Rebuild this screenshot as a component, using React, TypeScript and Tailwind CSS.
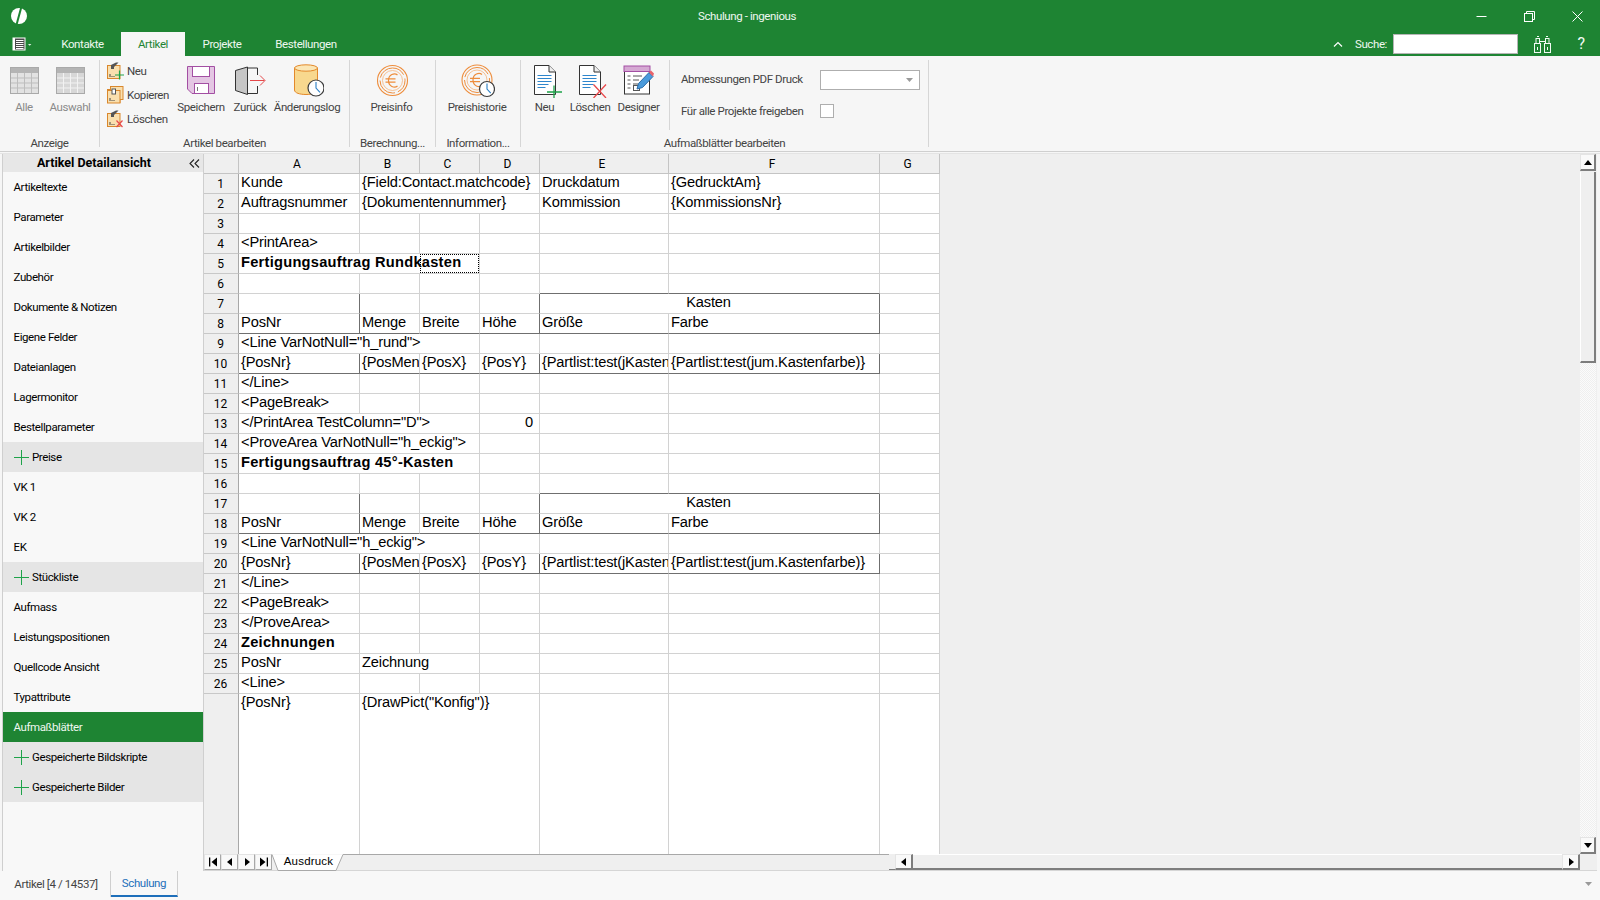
import React from "react";

type Cell = { t?: string; s?: number; c?: string; a?: "r" | "c"; b?: boolean; extra?: React.ReactNode };

const SPAN: Record<number, string> = { 1: "col-span-1", 2: "col-span-2", 3: "col-span-3", 4: "col-span-4" };
const D_R = "border-r-[#6f6f6f]";
const D_B = "border-b-[#6f6f6f]";

const blank = (n: number): Cell[] => Array.from({ length: n }, () => ({}));

const headRow = (): Cell[] => [
  { c: D_R },
  {},
  {},
  { c: D_R },
  { t: "Kasten", s: 2, a: "c", c: D_R },
  {},
];
const labelRow = (): Cell[] => [
  { t: "PosNr", c: `${D_R} ${D_B}` },
  { t: "Menge", c: D_B },
  { t: "Breite", c: D_B },
  { t: "Höhe", c: `${D_R} ${D_B}` },
  { t: "Größe", c: D_B },
  { t: "Farbe", c: `${D_R} ${D_B}` },
  {},
];
const valueRow = (): Cell[] => [
  { t: "{PosNr}", c: `${D_R} ${D_B}` },
  { t: "{PosMenge}", c: D_B },
  { t: "{PosX}", c: D_B },
  { t: "{PosY}", c: `${D_R} ${D_B}` },
  { t: "{Partlist:test(jKastengröße)}", c: D_B },
  { t: "{Partlist:test(jum.Kastenfarbe)}", c: `${D_R} ${D_B}` },
  {},
];
const aboveHead = (): Cell[] => [...blank(4), { c: D_B }, { c: D_B }, {}];

const rows: Cell[][] = [
  [{ t: "Kunde" }, { t: "{Field:Contact.matchcode}", s: 3 }, { t: "Druckdatum" }, { t: "{GedrucktAm}" }, {}],
  [{ t: "Auftragsnummer" }, { t: "{Dokumentennummer}", s: 3 }, { t: "Kommission" }, { t: "{KommissionsNr}" }, {}],
  blank(7),
  [{ t: "<PrintArea>" }, ...blank(6)],
  [
    {
      t: "Fertigungsauftrag Rundkasten",
      s: 3,
      b: true,
      extra: <div className="absolute left-[181px] top-0 h-[19px] w-[59px] border border-dotted border-black" />,
    },
    ...blank(4),
  ],
  aboveHead(),
  headRow(),
  labelRow(),
  [{ t: '<Line VarNotNull="h_rund">', s: 3 }, ...blank(4)],
  valueRow(),
  [{ t: "</Line>" }, ...blank(6)],
  [{ t: "<PageBreak>" }, ...blank(6)],
  [{ t: '</PrintArea TestColumn="D">', s: 3 }, { t: "0", a: "r" }, ...blank(3)],
  [{ t: '<ProveArea VarNotNull="h_eckig">', s: 3 }, ...blank(4)],
  [{ t: "Fertigungsauftrag 45°-Kasten", s: 3, b: true }, ...blank(4)],
  aboveHead(),
  headRow(),
  labelRow(),
  [{ t: '<Line VarNotNull="h_eckig">', s: 3 }, ...blank(4)],
  valueRow(),
  [{ t: "</Line>" }, ...blank(6)],
  [{ t: "<PageBreak>" }, ...blank(6)],
  [{ t: "</ProveArea>" }, ...blank(6)],
  [{ t: "Zeichnungen", b: true }, ...blank(6)],
  [{ t: "PosNr" }, { t: "Zeichnung", s: 2 }, ...blank(4)],
  [{ t: "<Line>" }, ...blank(6)],
];

function GridCell({ cell }: { cell: Cell }) {
  const align = cell.a === "r" ? "text-right pr-[6px]" : cell.a === "c" ? "text-center pr-[2px]" : "pl-[2px]";
  return (
    <div
      className={`relative h-[20px] overflow-hidden whitespace-nowrap border-r border-b border-[#d2d2d2] bg-white leading-[17px] text-black ${SPAN[cell.s ?? 1]} ${align} ${cell.b ? "text-[14.67px] font-bold tracking-[0.25px]" : "text-[14.67px] tracking-[-0.15px]"} ${cell.c ?? ""}`}
    >
      {cell.t}
      {cell.extra}
    </div>
  );
}

function Sheet() {
  return (
    <div className="grid w-[736px] grid-cols-[35px_121px_60px_60px_60px_129px_211px_60px] font-['Liberation_Sans',Arial,sans-serif] tracking-normal">
      <div className="h-[20px] border-r border-b border-[#c4c4c4] bg-[#efefef]" />
      {["A", "B", "C", "D", "E", "F", "G"].map((h) => (
        <div
          key={h}
          className="h-[20px] border-r border-b border-[#c4c4c4] bg-[#efefef] pr-[4px] text-center font-['Roboto',sans-serif] text-[12px] leading-[21px] text-black"
        >
          {h}
        </div>
      ))}
      {rows.map((r, i) => (
        <React.Fragment key={i}>
          <div className="h-[20px] border-r border-b border-r-[#a8a8a8] border-b-[#c8c8c8] bg-[#efefef] pr-px text-center font-['Roboto',sans-serif] text-[12px] leading-[20px] text-black">
            {i + 1}
          </div>
          {r.map((c, j) => (
            <GridCell key={j} cell={c} />
          ))}
        </React.Fragment>
      ))}
      <div className="h-[160px] border-r border-r-[#a8a8a8] bg-[#efefef]" />
      <div className="h-[160px] border-r border-[#d2d2d2] bg-white pl-[2px] text-[14.67px] leading-[17px] tracking-[-0.15px] text-black">{"{PosNr}"}</div>
      <div className="col-span-3 h-[160px] border-r border-[#d2d2d2] bg-white pl-[2px] text-[14.67px] leading-[17px] tracking-[-0.15px] text-black">
        {'{DrawPict("Konfig")}'}
      </div>
      <div className="h-[160px] border-r border-[#d2d2d2] bg-white" />
      <div className="h-[160px] border-r border-[#d2d2d2] bg-white" />
      <div className="h-[160px] border-r border-[#d2d2d2] bg-white" />
    </div>
  );
}

/* ---------- icons ---------- */

function Logo() {
  return (
    <svg width="18" height="18" viewBox="0 0 18 18">
      <circle cx="9" cy="9" r="8" fill="#fff" />
      <path d="M11.2 0.5 L6.6 17.5" stroke="#1e8433" strokeWidth="2" />
    </svg>
  );
}
function FileMenu() {
  return (
    <svg width="20" height="16" viewBox="0 0 20 16">
      <rect x="0.5" y="1.5" width="13" height="13" fill="#fff" />
      <rect x="3" y="2.5" width="9.5" height="11" fill="#4a4a4a" />
      <path d="M4 4.5h7.5M4 6.5h7.5M4 8.5h7.5M4 10.5h7.5M4 12.5h7.5" stroke="#fff" strokeWidth="1" />
      <path d="M16 8h3.4l-1.7 1.8z" fill="#dfeee2" />
    </svg>
  );
}
function TableIcon({ light }: { light?: boolean }) {
  const line = light ? "#f2f2f2" : "#bdbdbd";
  const fill = light ? "#d7d7d7" : "#e2e2e2";
  return (
    <svg width="29" height="30" viewBox="0 0 29 30">
      <rect x="0.5" y="3.5" width="28" height="26" fill={fill} stroke="#a9a9a9" />
      <rect x="1" y="4" width="27" height="5" fill="#b4b4b4" />
      <path
        d="M1 14h27M1 19h27M1 24h27M7.5 9v20M14.5 9v20M21.5 9v20"
        stroke={line}
        strokeWidth="1"
        fill="none"
      />
    </svg>
  );
}
function BoxIcon({ kind }: { kind: "plus" | "copy" | "x" }) {
  return (
    <svg width="18" height="18" viewBox="0 0 18 18">
      <rect x="0.5" y="3.5" width="12.5" height="13" fill="#f9dfae" stroke="#d9872c" />
      {kind === "copy" ? (
        <>
          <rect x="3.5" y="0.5" width="12.5" height="13" fill="#f9dfae" stroke="#d9872c" />
          <rect x="0.5" y="4.5" width="12.5" height="12.5" fill="#f9dfae" stroke="#d9872c" />
          <rect x="5" y="3" width="3.5" height="5" fill="#fff" stroke="#555" />
        </>
      ) : (
        <path d="M4 7 L4 3 L9 0.5 L11.5 0.5 L7 5 L7 7z" fill="#555" />
      )}
      <path d="M3 12v3M5 14v1M7 14v1" stroke="#444" strokeWidth="1" />
      {kind === "plus" && <path d="M12.5 8.5v9M8 13h9" stroke="#1ea34a" strokeWidth="1.2" />}
      {kind === "x" && <path d="M9.5 10.5l6 6.5M15.5 10.5l-6 6.5" stroke="#e8484a" strokeWidth="1.2" />}
    </svg>
  );
}
function Floppy() {
  return (
    <svg width="28" height="30" viewBox="0 0 28 30">
      <path d="M0.5 2.5H27.5V29.5H5L0.5 25z" fill="#e4c6e3" stroke="#a34fa3" />
      <rect x="5.5" y="2.5" width="17" height="10" fill="#fff" stroke="#a34fa3" />
      <rect x="7.5" y="19.5" width="14" height="10" fill="#fff" stroke="#a34fa3" />
      <path d="M10.5 23v4" stroke="#777" />
    </svg>
  );
}
function Door() {
  return (
    <svg width="31" height="32" viewBox="0 0 31 32">
      <path d="M12.5 3L0.5 6.5V26.5L12.5 30.5z" fill="#c6c6c6" stroke="#333" />
      <path d="M12.5 4H22.5V11M22.5 22V29.5H12.5" fill="none" stroke="#333" />
      <path d="M15 16.5H29.5M25 11.5L30 16.5L25 21.5" fill="none" stroke="#e5484a" strokeWidth="1" />
    </svg>
  );
}
function Clock({ cx, cy, r }: { cx: number; cy: number; r: number }) {
  return (
    <>
      <circle cx={cx} cy={cy} r={r} fill="#fff" stroke="#3c3c3c" strokeWidth="1.2" />
      <path d={`M${cx} ${cy - r + 2}V${cy}L${cx + r * 0.5} ${cy + r * 0.55}`} fill="none" stroke="#2b7fc4" strokeWidth="1.1" />
    </>
  );
}
function Database() {
  return (
    <svg width="34" height="34" viewBox="0 0 34 34">
      <path d="M4.5 4V26C4.5 29 10 30.5 16 30.5S27.5 29 27.5 26V4z" fill="#f8d88e" stroke="#e3892b" />
      <ellipse cx="16" cy="4" rx="11.5" ry="3.2" fill="#fbe6b5" stroke="#e3892b" />
      <Clock cx={26} cy={24} r={8} />
    </svg>
  );
}
function Coin({ cx, cy }: { cx: number; cy: number }) {
  const o = "#ee8d3c";
  return (
    <g fill="none" stroke={o}>
      <circle cx={cx} cy={cy} r={15} strokeWidth="1.1" />
      <circle cx={cx} cy={cy} r={12.5} strokeWidth="1" strokeDasharray="14 3 22 3 30 4" />
      <circle cx={cx} cy={cy} r={10} strokeWidth="0.8" stroke="#f5b27b" />
      <path
        d={`M${cx + 5} ${cy - 5.5}C${cx + 2} ${cy - 8} ${cx - 4} ${cy - 6} ${cx - 4} ${cy}S${cx + 2} ${cy + 8} ${cx + 5} ${cy + 5.5}M${cx - 7} ${cy - 1.6}H${cx + 3}M${cx - 7} ${cy + 1.6}H${cx + 3}`}
        strokeWidth="1.2"
      />
    </g>
  );
}
function PriceInfo() {
  return (
    <svg width="34" height="34" viewBox="0 0 34 34">
      <Coin cx={17.5} cy={16.5} />
    </svg>
  );
}
function PriceHistory() {
  return (
    <svg width="36" height="34" viewBox="0 0 36 34">
      <Coin cx={18} cy={16} />
      <Clock cx={28} cy={25} r={7.5} />
    </svg>
  );
}
function DocIcon({ kind }: { kind: "plus" | "x" }) {
  return (
    <svg width="34" height="34" viewBox="0 0 34 34">
      <path d="M6.5 1.5H21L27.5 8V30.5H6.5z" fill="#fff" stroke="#333" />
      <path d="M21 1.5V8H27.5" fill="#eee" stroke="#333" />
      <path d="M9.5 11.5h14M9.5 14.5h14M9.5 17.5h14M9.5 20.5h11M9.5 23.5h8" stroke="#2f86cc" strokeWidth="1" />
      {kind === "plus" ? (
        <path d="M26 21.5v13M19 28h15" stroke="#1ea34a" strokeWidth="1.3" />
      ) : (
        <path d="M20.5 20.5l12.5 13.5M33 20.5L20.5 34" stroke="#e8484a" strokeWidth="1.3" />
      )}
    </svg>
  );
}
function Designer() {
  return (
    <svg width="32" height="32" viewBox="0 0 32 32">
      <rect x="1.5" y="2.5" width="25" height="27.5" fill="#fff" stroke="#333" />
      <rect x="1" y="2" width="26" height="5.5" fill="#d5a9d3" stroke="#a34fa3" />
      <path d="M4.5 12h3M4.5 16h3M4.5 20h3M4.5 24h3M10 12h9M10 16h6M10 20h5" stroke="#555" strokeWidth="1" />
      <rect x="10.5" y="21.5" width="6" height="5" fill="none" stroke="#555" />
      <path d="M14 25L15.5 19.5L26 8.5L30 12.5L19.5 23.5z" fill="#4b9bdc" stroke="#2b6ca8" />
      <path d="M26 8.5L28 6.5L31 9.5L30 12.5z" fill="#e8636a" />
    </svg>
  );
}
function Binoculars() {
  return (
    <svg width="17" height="17" viewBox="0 0 17 17" fill="none" stroke="#f2fbf4">
      <rect x="0.5" y="7.5" width="6" height="9" />
      <rect x="10.5" y="7.5" width="6" height="9" />
      <rect x="2" y="2.5" width="3.5" height="5" />
      <rect x="11.5" y="2.5" width="3.5" height="5" />
      <path d="M3 0.5h2M12 0.5h2M6 5.5h5M3.5 11v3M13.5 11v3" />
    </svg>
  );
}
function Plus() {
  return (
    <svg width="15" height="15" viewBox="0 0 15 15">
      <path d="M7.5 0v15M0 7.5h15" stroke="#1ea34a" strokeWidth="1" />
    </svg>
  );
}
function Tri({ dir }: { dir: "up" | "down" | "left" | "right" | "first" | "last" }) {
  const p: Record<string, string> = {
    up: "M1 8h8L5 3z",
    down: "M1 3h8L5 8z",
    left: "M7 1v8L2 5z",
    right: "M3 1v8L8 5z",
    first: "M9 0.5v9L3.5 5zM1 0.5h1.3v9H1z",
    last: "M1 0.5v9L6.5 5zM9 0.5h-1.3v9H9z",
  };
  return (
    <svg width="10" height="10" viewBox="0 0 10 10">
      <path d={p[dir]} fill="#000" />
    </svg>
  );
}

/* ---------- ribbon parts ---------- */

function Large({ w, icon, label, dim }: { w: string; icon: React.ReactNode; label: string; dim?: boolean }) {
  return (
    <div className={`flex shrink-0 flex-col items-center pt-[8px] ${w}`}>
      <div className="flex h-[34px] items-start justify-center">{icon}</div>
      <div className={`h-[18px] whitespace-nowrap leading-[18px] ${dim ? "text-[#8a8a8a]" : "text-[#444]"}`}>{label}</div>
    </div>
  );
}
function Small({ icon, label }: { icon: React.ReactNode; label: string }) {
  return (
    <div className="flex h-[24px] items-center gap-[2px] pl-[3px]">
      {icon}
      <span className="whitespace-nowrap pt-px text-[#444]">{label}</span>
    </div>
  );
}
function Group({ w, label, children }: { w: string; label: string; children: React.ReactNode }) {
  return (
    <div className={`flex shrink-0 flex-col ${w}`}>
      <div className="flex h-[78px]">{children}</div>
      <div className="h-[17px] whitespace-nowrap pt-px text-center leading-[17px] text-[#444]">{label}</div>
    </div>
  );
}
const Sep = () => <div className="my-[4px] w-px shrink-0 bg-[#d6d6d6]" />;

const sideItems: { t: string; g?: boolean; a?: boolean }[] = [
  { t: "Artikeltexte" },
  { t: "Parameter" },
  { t: "Artikelbilder" },
  { t: "Zubehör" },
  { t: "Dokumente & Notizen" },
  { t: "Eigene Felder" },
  { t: "Dateianlagen" },
  { t: "Lagermonitor" },
  { t: "Bestellparameter" },
  { t: "Preise", g: true },
  { t: "VK 1" },
  { t: "VK 2" },
  { t: "EK" },
  { t: "Stückliste", g: true },
  { t: "Aufmass" },
  { t: "Leistungspositionen" },
  { t: "Quellcode Ansicht" },
  { t: "Typattribute" },
  { t: "Aufmaßblätter", a: true },
  { t: "Gespeicherte Bildskripte", g: true },
  { t: "Gespeicherte Bilder", g: true },
];

const scrollBtn =
  "flex items-center justify-center bg-[#f9f9f9] border-l border-t border-l-[#e4e4e4] border-t-[#e4e4e4] border-r-2 border-b-2 border-r-[#7d7d7d] border-b-[#7d7d7d]";

export default function App() {
  return (
    <div className="flex h-[900px] w-[1600px] flex-col overflow-hidden bg-[#f6f6f6] font-['Roboto',sans-serif] text-[11.5px] tracking-[-0.4px]">
      {/* title bar */}
      <div className="flex h-[32px] shrink-0 items-center bg-[#1e8433] text-[#eef8f0]">
        <div className="flex w-[28px] justify-end">
          <Logo />
        </div>
        <div className="ml-[670px] whitespace-nowrap pt-px">Schulung - ingenious</div>
        <div className="-mr-px ml-auto flex">
          <div className="flex h-[32px] w-[48px] items-center justify-center">
            <svg width="11" height="11" viewBox="0 0 11 11">
              <path d="M0.5 5.5H10.5" stroke="#fff" />
            </svg>
          </div>
          <div className="flex h-[32px] w-[48px] items-center justify-center">
            <svg width="11" height="11" viewBox="0 0 11 11" fill="none" stroke="#fff">
              <rect x="0.5" y="2.5" width="8" height="8" />
              <path d="M2.5 2.5V0.5H10.5V8.5H8.5" />
            </svg>
          </div>
          <div className="flex h-[32px] w-[48px] items-center justify-center">
            <svg width="11" height="11" viewBox="0 0 11 11">
              <path d="M0.5 0.5L10.5 10.5M10.5 0.5L0.5 10.5" stroke="#fff" />
            </svg>
          </div>
        </div>
      </div>

      {/* tab row */}
      <div className="flex h-[24px] shrink-0 items-center bg-[#1e8433] text-[#eef8f0]">
        <div className="flex w-[44px] justify-start pl-[12px]">
          <FileMenu />
        </div>
        <div className="w-[77px] pt-[2px] text-center">Kontakte</div>
        <div className="flex h-[24px] w-[64px] items-center justify-center bg-[#f6f6f6] pt-[2px] text-[#1e8433]">Artikel</div>
        <div className="w-[74px] pt-[2px] text-center">Projekte</div>
        <div className="w-[94px] pt-[2px] text-center">Bestellungen</div>
        <div className="ml-auto flex items-center">
          <svg width="10" height="7" viewBox="0 0 10 7" fill="none" stroke="#fff" strokeWidth="1.2">
            <path d="M1 5.5L5 1.5L9 5.5" />
          </svg>
          <span className="ml-[12px] pt-px">Suche:</span>
          <div className="ml-[6px] h-[20px] w-[125px] border border-[#b5b5b5] bg-white" />
          <div className="ml-[16px]">
            <Binoculars />
          </div>
          <div className="ml-[22px] mr-[11px] w-[16px] text-center text-[16px] leading-[18px] text-[#f2fbf4]">?</div>
        </div>
      </div>

      {/* ribbon */}
      <div className="flex h-[95px] shrink-0">
        <Group w="w-[99px]" label="Anzeige">
          <div className="w-px" />
          <Large w="w-[46px]" icon={<TableIcon />} label="Alle" dim />
          <Large w="w-[46px]" icon={<TableIcon light />} label="Auswahl" dim />
        </Group>
        <Sep />
        <Group w="w-[249px]" label="Artikel bearbeiten">
          <div className="w-[4px]" />
          <div className="flex w-[71px] flex-col pt-[3px]">
            <Small icon={<BoxIcon kind="plus" />} label="Neu" />
            <Small icon={<BoxIcon kind="copy" />} label="Kopieren" />
            <Small icon={<BoxIcon kind="x" />} label="Löschen" />
          </div>
          <Large w="w-[52px]" icon={<Floppy />} label="Speichern" />
          <Large w="w-[46px]" icon={<Door />} label="Zurück" />
          <Large w="w-[68px]" icon={<Database />} label="Änderungslog" />
        </Group>
        <Sep />
        <Group w="w-[85px]" label="Berechnung...">
          <Large w="w-[83px]" icon={<PriceInfo />} label="Preisinfo" />
        </Group>
        <Sep />
        <Group w="w-[84px]" label="Information...">
          <Large w="w-[82px]" icon={<PriceHistory />} label="Preishistorie" />
        </Group>
        <Sep />
        <Group w="w-[407px]" label="Aufmaßblätter bearbeiten">
          <Large w="w-[47px]" icon={<DocIcon kind="plus" />} label="Neu" />
          <Large w="w-[44px]" icon={<DocIcon kind="x" />} label="Löschen" />
          <Large w="w-[53px]" icon={<Designer />} label="Designer" />
          <div className="ml-[4px] mt-[4px] mb-[-13px] h-[70px] w-px bg-[#d6d6d6]" />
          <div className="ml-[11px] flex flex-col pt-[13px] text-[#444]">
            <div className="flex h-[20px] items-center">
              <span className="w-[139px] whitespace-nowrap pt-px">Abmessungen PDF Druck</span>
              <div className="mt-[1px] flex h-[20px] w-[100px] items-center justify-end border border-[#aeaeae] bg-white pr-[6px]">
                <svg width="7" height="4" viewBox="0 0 7 4">
                  <path d="M0 0h7L3.5 4z" fill="#9a9a9a" />
                </svg>
              </div>
            </div>
            <div className="mt-[12px] flex h-[20px] items-center">
              <span className="w-[139px] whitespace-nowrap pt-px">Für alle Projekte freigeben</span>
              <div className="h-[14px] w-[14px] border border-[#aeaeae] bg-white" />
            </div>
          </div>
        </Group>
        <Sep />
      </div>

      {/* separator */}
      <div className="h-[3px] shrink-0 border-t border-b border-t-[#cfcfcf] border-b-[#e4e4e4] bg-[#f6f6f6]" />

      {/* main */}
      <div className="flex min-h-0 flex-1 pl-[2px] pr-[3px]">
        {/* sidebar */}
        <div className="flex w-[202px] shrink-0 flex-col border-l border-r border-[#cfcfcf] bg-[#f8f8f8]">
          <div className="flex h-[18px] shrink-0 items-center bg-[#e7e7e7]">
            <div className="w-[178px] pl-[4px] text-center text-[12.5px] font-bold tracking-normal text-black">Artikel Detailansicht</div>
            <svg className="ml-[8px]" width="11" height="9" viewBox="0 0 11 9" fill="none" stroke="#222" strokeWidth="1.1">
              <path d="M5 0.5L1 4.5L5 8.5M10 0.5L6 4.5L10 8.5" />
            </svg>
          </div>
          {sideItems.map((it) => (
            <div
              key={it.t}
              className={`flex h-[30px] shrink-0 items-center whitespace-nowrap ${
                it.a
                  ? "bg-[#1e8433] pl-[10.5px] text-[#eef8f0]"
                  : it.g
                    ? "bg-[#e5e5e5] pl-[11px] text-black"
                    : "pl-[10.5px] text-black"
              }`}
            >
              {it.g && (
                <span className="mr-[3px] flex">
                  <Plus />
                </span>
              )}
              <span className="pt-px">{it.t}</span>
            </div>
          ))}
        </div>

        {/* sheet area */}
        <div className="flex min-w-0 flex-1 flex-col">
          <div className="flex min-h-0 flex-1">
            <div className="min-w-0 flex-1 bg-[#efefef]">
              <Sheet />
            </div>
            <div className="flex w-[17px] shrink-0 flex-col bg-[#efefef] pr-px">
              <div className={`h-[17px] shrink-0 ${scrollBtn}`}>
                <Tri dir="up" />
              </div>
              <div className="mt-[1px] h-[191px] shrink-0 border-l border-l-white border-r-2 border-b-2 border-r-[#7d7d7d] border-b-[#7d7d7d] bg-[#efefef]" />
              <div className="flex-1 bg-[repeating-conic-gradient(#efefef_0_25%,#fbfbfb_0_50%)] bg-[length:2px_2px]" />
              <div className={`h-[17px] shrink-0 ${scrollBtn}`}>
                <Tri dir="down" />
              </div>
            </div>
          </div>
          {/* sheet tabs + hscroll */}
          <div className="flex h-[17px] shrink-0 border-b border-[#d6d6d6] bg-[#efefef]">
            <div className={`w-[17px] ${scrollBtn} !border-r !border-b !border-r-[#a8a8a8] !border-b-[#a8a8a8]`}>
              <Tri dir="first" />
            </div>
            <div className={`w-[17px] ${scrollBtn} !border-r !border-b !border-r-[#a8a8a8] !border-b-[#a8a8a8]`}>
              <Tri dir="left" />
            </div>
            <div className={`w-[17px] ${scrollBtn} !border-r !border-b !border-r-[#a8a8a8] !border-b-[#a8a8a8]`}>
              <Tri dir="right" />
            </div>
            <div className={`w-[17px] ${scrollBtn} !border-r !border-b !border-r-[#a8a8a8] !border-b-[#a8a8a8]`}>
              <Tri dir="last" />
            </div>
            <div className="relative flex w-[74px] shrink-0 items-center justify-center font-['Liberation_Sans',sans-serif] text-[11.5px] tracking-[0.2px] text-black">
              <svg className="absolute inset-0" width="74" height="17" viewBox="0 0 74 17">
                <path d="M0 0.5L6 16.5H64L71 0.5" fill="#fff" stroke="#a8a8a8" />
                <path d="M71 0.5H74" stroke="#a8a8a8" />
              </svg>
              <span className="relative pr-[1px]">Ausdruck</span>
            </div>
            <div className="w-[543px] shrink-0 border-t border-[#a8a8a8] bg-[#efefef]" />
            <div className="w-[6px] shrink-0 border-b border-[#7d7d7d]" />
            <div className={`w-[18px] shrink-0 ${scrollBtn}`}>
              <Tri dir="left" />
            </div>
            <div className="flex-1 border-t border-b-2 border-t-white border-b-[#7d7d7d] bg-[#efefef]" />
            <div className={`w-[18px] shrink-0 ${scrollBtn}`}>
              <Tri dir="right" />
            </div>
            <div className="w-[17px] shrink-0 bg-[#efefef]" />
          </div>
        </div>
      </div>

      {/* bottom tabs */}
      <div className="flex h-[29px] shrink-0 bg-[#f8f8f8] pl-[2px] pr-[3px]">
        <div className="flex h-[26px] w-[109px] items-center justify-center border-r border-[#cfcfcf] pt-px text-[#444]">
          Artikel [4 / 14537]
        </div>
        <div className="flex h-[26px] w-[67px] items-center justify-center border-r border-b-2 border-r-[#cfcfcf] border-b-[#1e6fba] pt-px text-[#1e6fba]">
          Schulung
        </div>
        <div className="ml-auto flex h-[26px] items-center pr-[5px]">
          <svg width="7" height="4" viewBox="0 0 7 4">
            <path d="M0 0h7L3.5 4z" fill="#9a9a9a" />
          </svg>
        </div>
      </div>
    </div>
  );
}
